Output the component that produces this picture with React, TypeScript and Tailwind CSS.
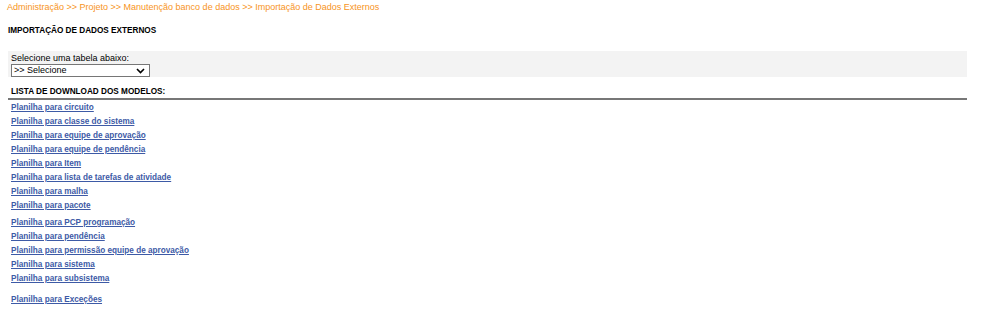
const links = [
  "Planilha para circuito",
  "Planilha para classe do sistema",
  "Planilha para equipe de aprovação",
  "Planilha para equipe de pendência",
  "Planilha para Item",
  "Planilha para lista de tarefas de atividade",
  "Planilha para malha",
  "Planilha para pacote",
];

const links2 = [
  "Planilha para PCP programação",
  "Planilha para pendência",
  "Planilha para permissão equipe de aprovação",
  "Planilha para sistema",
  "Planilha para subsistema",
];

export default function App() {
  return (
    <div className="w-[984px] h-[316px] bg-white font-['Liberation_Sans',Arial,sans-serif] text-[9px] text-black">
      <div className="pl-[7px] pt-[2px] h-[14px] leading-[11px] text-[#f7941d]">
        Administração &gt;&gt; Projeto &gt;&gt; Manutenção banco de dados &gt;&gt; Importação de Dados Externos
      </div>
      <h1 className="pl-[8px] pt-[11px] font-bold text-[8.2px] leading-[11px]">
        IMPORTAÇÃO DE DADOS EXTERNOS
      </h1>
      <div className="ml-[8px] mt-[15px] w-[959px] h-[26px] bg-[#f3f3f3] pl-[3px] pt-[2px]">
        <div className="leading-[11px]">Selecione uma tabela abaixo:</div>
        <div className="w-[139px] h-[13px] border border-[#767676] bg-white flex items-center justify-between pl-[2px] pr-[4px] leading-[11px]">
          <span>&gt;&gt; Selecione</span>
          <svg width="9" height="6" viewBox="0 0 9 6">
            <path d="M1 1l3.5 3.5L8 1" stroke="#000" strokeWidth="1.6" fill="none" />
          </svg>
        </div>
      </div>
      <div className="ml-[8px] w-[959px] pt-[9px] pl-[3px] pb-[1px] border-b-2 border-[#777] font-bold text-[8.2px] leading-[11px]">
        LISTA DE DOWNLOAD DOS MODELOS:
      </div>
      <div className="pl-[11px] pt-[1px] flex flex-col font-bold text-[8.2px] text-[#3d5aa6] leading-[14px]">
        {links.map((l) => (
          <a key={l} href="#" className="underline">
            {l}
          </a>
        ))}
        <div className="h-[3px]" />
        {links2.map((l) => (
          <a key={l} href="#" className="underline">
            {l}
          </a>
        ))}
        <div className="h-[7px]" />
        <a href="#" className="underline">
          Planilha para Exceções
        </a>
      </div>
    </div>
  );
}
